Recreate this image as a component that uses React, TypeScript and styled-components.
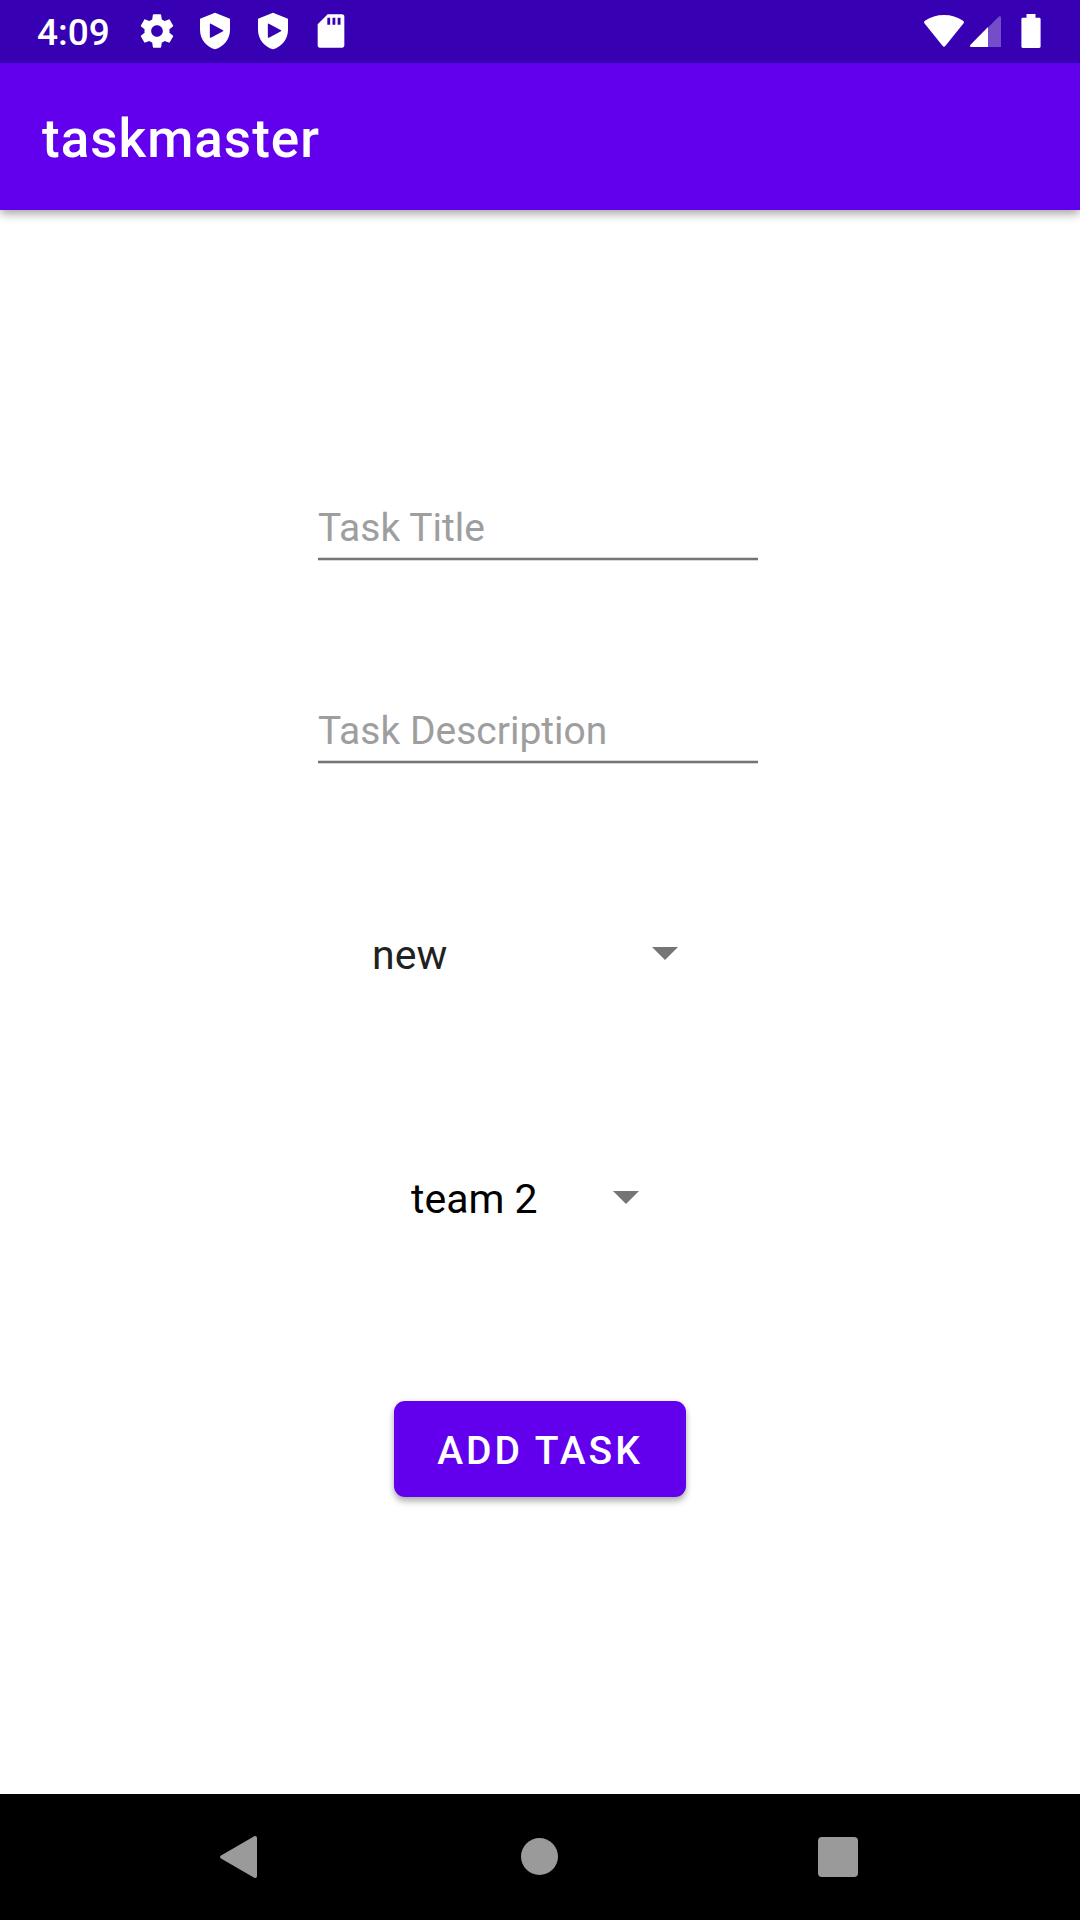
import React, { useState } from "react";
import styled, { createGlobalStyle } from "styled-components";

const GlobalStyle = createGlobalStyle`
  *, *::before, *::after { box-sizing: border-box; }
  body {
    margin: 0;
    background: #fff;
    font-family: Roboto, "Noto Sans", sans-serif;
  }
`;

const Screen = styled.div`
  display: flex;
  flex-direction: column;
  min-height: 100vh;
`;

const StatusBar = styled.header`
  display: flex;
  z-index: 1;
  align-items: center;
  justify-content: space-between;
  height: 63px;
  padding: 0 39px 1px 37px;
  background: #3700b3;
  color: #fff;
`;

const StatusGroup = styled.div<{ $gap: number }>`
  display: flex;
  align-items: center;
  gap: ${(p) => p.$gap}px;
`;

const Clock = styled.time`
  padding: 4px 9px 0 0;
  font-size: 37px;
  font-weight: 500;
  line-height: 44px;
`;

const StatusIcon = styled.svg`
  display: block;
  fill: currentColor;
`;

const AppBar = styled.div`
  display: flex;
  align-items: center;
  height: 147px;
  padding: 4px 42px 0;
  background: #6200ee;
  color: #fff;
  box-shadow: 0 3px 10px rgba(0, 0, 0, 0.4);
`;

const AppTitle = styled.h1`
  margin: 0;
  font-size: 53px;
  font-weight: 500;
  line-height: 64px;
  letter-spacing: 1px;
`;

const Content = styled.main`
  flex: 1;
  padding: 276px 24px 48px;
`;

const TaskForm = styled.form`
  display: flex;
  flex-direction: column;
  align-items: center;
`;

const FieldGroup = styled.div<{ $gap: number; $after: number; $inset?: number }>`
  display: flex;
  flex-direction: column;
  align-items: center;
  gap: ${(p) => p.$gap}px;
  margin-bottom: ${(p) => p.$after}px;
  padding-right: ${(p) => p.$inset ?? 0}px;
`;

const TextField = styled.input`
  width: 440px;
  max-width: 100%;
  height: 74px;
  padding: 12px 0 0;
  border: 0;
  border-bottom: 2px solid #757575;
  border-radius: 0;
  outline: 0;
  background: transparent;
  box-shadow: 0 1px 0 #d8d8d8, inset 0 -1px 0 #d8d8d8;
  color: #212121;
  font-family: inherit;
  font-size: 39px;

  &::placeholder {
    color: #9e9e9e;
    opacity: 1;
  }
`;

const SpinnerBox = styled.div<{ $width: number }>`
  display: grid;
  align-items: center;
  width: ${(p) => p.$width}px;
  max-width: 100%;
  height: 64px;

  & > * {
    grid-area: 1 / 1;
  }
`;

const SpinnerSelect = styled.select<{ $color: string }>`
  appearance: none;
  width: 100%;
  height: 64px;
  padding: 4px 90px 0 20px;
  border: 0;
  background: transparent;
  color: ${(p) => p.$color};
  font-family: inherit;
  font-size: 41px;
  line-height: 50px;
`;

const Caret = styled.svg`
  justify-self: end;
  margin-right: 50px;
  fill: #757575;
  pointer-events: none;
`;

const SubmitButton = styled.button`
  height: 96px;
  padding: 4px 43px 0;
  border: 0;
  border-radius: 11px;
  background: #6200ee;
  color: #fff;
  box-shadow: 0 5px 6px rgba(0, 0, 0, 0.24), 0 1px 6px rgba(0, 0, 0, 0.14);
  font-family: inherit;
  font-size: 39px;
  font-weight: 500;
  letter-spacing: 3px;
  text-transform: uppercase;
`;

const NavBar = styled.nav`
  display: flex;
  justify-content: center;
  height: 126px;
  background: #000;
`;

const NavButton = styled.button`
  display: flex;
  flex: 0 1 298px;
  align-items: center;
  justify-content: center;
  padding: 0;
  border: 0;
  background: transparent;
  color: #9a9a9a;
`;

const SettingsIcon = () => (
  <StatusIcon width="40" height="40" viewBox="0 0 24 24" aria-hidden="true">
    <path d="M19.43 12.98c.04-.32.07-.64.07-.98s-.03-.66-.07-.98l2.11-1.65c.19-.15.24-.42.12-.64l-2-3.46c-.12-.22-.39-.3-.61-.22l-2.49 1c-.52-.4-1.08-.73-1.69-.98l-.38-2.65C14.46 2.18 14.25 2 14 2h-4c-.25 0-.46.18-.49.42l-.38 2.65c-.61.25-1.17.59-1.69.98l-2.49-1c-.23-.09-.49 0-.61.22l-2 3.46c-.13.22-.07.49.12.64l2.11 1.65c-.04.32-.07.65-.07.98s.03.66.07.98l-2.11 1.65c-.19.15-.24.42-.12.64l2 3.46c.12.22.39.3.61.22l2.49-1c.52.4 1.08.73 1.69.98l.38 2.65c.03.24.24.42.49.42h4c.25 0 .46-.18.49-.42l.38-2.65c.61-.25 1.17-.59 1.69-.98l2.49 1c.23.09.49 0 .61-.22l2-3.46c.12-.22.07-.49-.12-.64l-2.11-1.65zM12 15.5c-1.93 0-3.5-1.57-3.5-3.5s1.57-3.5 3.5-3.5 3.5 1.57 3.5 3.5-1.57 3.5-3.5 3.5z" />
  </StatusIcon>
);

const ShieldIcon = () => (
  <StatusIcon width="40" height="40" viewBox="0 0 24 24" aria-hidden="true">
    <path
      fillRule="evenodd"
      d="M12 1 3 4.7v6.6C3 17 6.8 21.6 12 23c5.2-1.4 9-6 9-11.7V4.7L12 1zM9.5 7.6c-.3-.15-.6 0-.6.4v7.6c0 .4.3.55.6.4l7.3-3.9c.3-.15.3-.45 0-.6L9.5 7.6z"
    />
  </StatusIcon>
);

const SdCardIcon = () => (
  <StatusIcon width="40" height="40" viewBox="0 0 24 24" aria-hidden="true">
    <path
      fillRule="evenodd"
      d="M18.7 2H10L4 8v12.7c0 .7.6 1.3 1.3 1.3h13.400c.7 0 1.3-.6 1.3-1.300V3.300c0-.7-.6-1.300-1.300-1.300zM11.500 8.200H9.800V4h1.700v4.200zm3.100 0h-1.700V4h1.700v4.200zm3.100 0H16V4h1.700v4.200z"
    />
  </StatusIcon>
);

const WifiIcon = () => (
  <StatusIcon width="40" height="33" viewBox="0 0 40 33" aria-hidden="true">
    <path d="M.8 8.8C-.3 7.7-.2 6.5 1 5.700 6.500 1.900 13 0 20 0s13.500 1.900 19 5.700c1.200.8 1.300 2 .2 3.100L21.300 31c-.8 1-1.800 1-2.600 0z" />
  </StatusIcon>
);

const SignalIcon = () => (
  <StatusIcon width="31" height="31" viewBox="0 0 31 31" aria-hidden="true">
    <path opacity=".3" d="M18 11.500 28.600.8c1-1 2.400-.6 2.400.9V31H18z" />
    <path d="M18 11v20H1.200c-1.300 0-1.600-1.200-.7-2.200z" />
  </StatusIcon>
);

const BatteryIcon = () => (
  <StatusIcon width="20" height="34" viewBox="0 0 20 34" aria-hidden="true">
    <path d="M5.500 0h9v3.700h3.700c.8 0 1.400.6 1.400 1.400v27.500c0 .8-.6 1.400-1.400 1.400H1.800C1 34 .4 33.400.4 32.600V5.100c0-.8.6-1.400 1.400-1.400h3.700z" />
  </StatusIcon>
);

interface SpinnerProps {
  label: string;
  width: number;
  color: string;
  options: string[];
}

const Spinner = ({ label, width, color, options }: SpinnerProps) => {
  const [value, setValue] = useState(options[0]);
  return (
    <SpinnerBox $width={width}>
      <SpinnerSelect
        aria-label={label}
        $color={color}
        value={value}
        onChange={(e) => setValue(e.target.value)}
      >
        {options.map((option) => (
          <option key={option}>{option}</option>
        ))}
      </SpinnerSelect>
      <Caret width="26" height="13" viewBox="0 0 26 13" aria-hidden="true">
        <path d="M0 0h26L13 13z" />
      </Caret>
    </SpinnerBox>
  );
};

export default function App() {
  return (
    <>
      <GlobalStyle />
      <Screen>
        <StatusBar>
          <StatusGroup $gap={18}>
            <Clock>4:09</Clock>
            <SettingsIcon />
            <ShieldIcon />
            <ShieldIcon />
            <SdCardIcon />
          </StatusGroup>
          <StatusGroup $gap={20}>
            <StatusGroup $gap={6}>
              <WifiIcon />
              <SignalIcon />
            </StatusGroup>
            <BatteryIcon />
          </StatusGroup>
        </StatusBar>

        <AppBar>
          <AppTitle>taskmaster</AppTitle>
        </AppBar>

        <Content>
          <TaskForm onSubmit={(e) => e.preventDefault()}>
            <FieldGroup $gap={129} $after={158} $inset={4}>
              <TextField type="text" aria-label="Task Title" placeholder="Task Title" />
              <TextField type="text" aria-label="Task Description" placeholder="Task Description" />
            </FieldGroup>
            <FieldGroup $gap={180} $after={172}>
              <Spinner label="State" width={376} color="#212121" options={["new"]} />
              <Spinner label="Team" width={298} color="#000" options={["team 2"]} />
            </FieldGroup>
            <SubmitButton type="submit">Add Task</SubmitButton>
          </TaskForm>
        </Content>

        <NavBar aria-label="System">
          <NavButton type="button" aria-label="Back">
            <svg width="44" height="44" viewBox="0 0 44 44" fill="currentColor" aria-hidden="true">
              <path d="M1 20.400 33.800 1.400C35.500.4 37 1.200 37 3v38c0 1.800-1.500 2.600-3.200 1.600L1 23.600c-1.300-.8-1.300-2.400 0-3.200z" />
            </svg>
          </NavButton>
          <NavButton type="button" aria-label="Home">
            <svg width="38" height="38" viewBox="0 0 38 38" fill="currentColor" aria-hidden="true">
              <circle cx="18.500" cy="18.500" r="18.500" />
            </svg>
          </NavButton>
          <NavButton type="button" aria-label="Overview">
            <svg width="40" height="40" viewBox="0 0 40 40" fill="currentColor" aria-hidden="true">
              <rect width="40" height="40" rx="4" />
            </svg>
          </NavButton>
        </NavBar>
      </Screen>
    </>
  );
}
